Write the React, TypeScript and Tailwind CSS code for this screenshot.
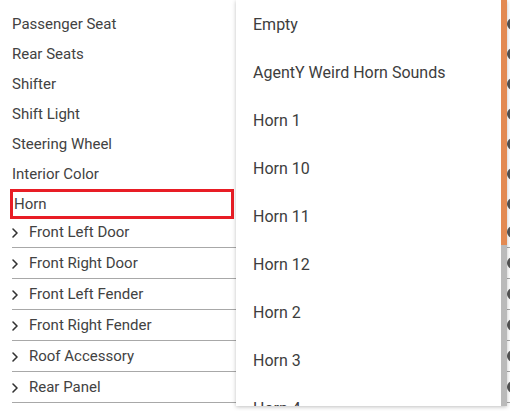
import { ChevronRight } from 'lucide-react'

const simpleItems = [
  'Passenger Seat',
  'Rear Seats',
  'Shifter',
  'Shift Light',
  'Steering Wheel',
  'Interior Color',
]

const groups = [
  'Front Left Door',
  'Front Right Door',
  'Front Left Fender',
  'Front Right Fender',
  'Roof Accessory',
  'Rear Panel',
]

const options = [
  'Empty',
  'AgentY Weird Horn Sounds',
  'Horn 1',
  'Horn 10',
  'Horn 11',
  'Horn 12',
  'Horn 2',
  'Horn 3',
  'Horn 4',
]

function Knob({ left = 'left-[507px]' }: { left?: string }) {
  return <span className={`absolute ${left} top-1/2 h-3 w-3 -translate-y-1/2 rounded-full bg-[#555]`} />
}

export default function App() {
  return (
    <div
      className="relative h-[411px] w-[510px] overflow-hidden bg-white text-[#424242]"
      style={{ fontFamily: 'Roboto, "Liberation Sans", sans-serif' }}
    >
      {/* Parts list */}
      <ul className="pt-[9px] text-[15px]">
        {simpleItems.map(item => (
          <li key={item} className="relative flex h-[30px] items-center pl-3">
            {item}
            <Knob />
          </li>
        ))}
        <li className="relative flex h-[30px] items-center">
          <div className="ml-[10px] flex h-[30px] w-[224px] items-center border-[3px] border-[#e81d25] pl-px">
            Horn
          </div>
          <Knob />
        </li>
      </ul>
      <ul className="-mt-[2px] text-[15px]">
        {groups.map(item => (
          <li
            key={item}
            className="relative ml-3 flex h-[31px] items-center border-b border-[#a8a8a8] pt-px"
          >
            <ChevronRight size={16} strokeWidth={2.4} className="-ml-[5px] mr-[6px] text-[#333]" />
            {item}
            <Knob left="left-[495px]" />
          </li>
        ))}
      </ul>

      {/* Dropdown overlay */}
      <div className="absolute left-[236px] top-0 flex h-[406px] w-[271px] bg-white shadow-[0_1px_4px_rgba(0,0,0,0.25)]">
        <ul className="flex-1 overflow-hidden text-[16px] text-[#3d3d3d]">
          {options.map(opt => (
            <li key={opt} className="flex h-12 shrink-0 items-center pl-[17px] pt-px">
              {opt}
            </li>
          ))}
        </ul>
        <div className="flex w-[6px] flex-col bg-[#bababa]">
          <div className="h-[245px] bg-[#e38a52]" />
        </div>
      </div>
    </div>
  )
}
